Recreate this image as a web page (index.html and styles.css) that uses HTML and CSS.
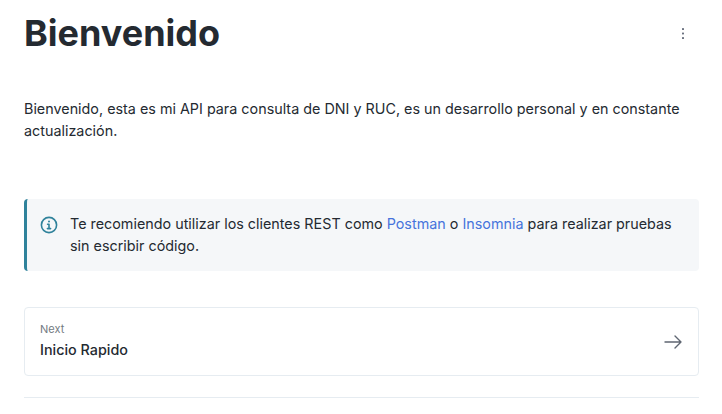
FILE: index.html
```html
<!DOCTYPE html>
<html lang="es">
  <head>
    <meta charset="UTF-8" />
    <meta name="viewport" content="width=device-width, initial-scale=1.0" />
    <title>Bienvenido</title>
    <link rel="stylesheet" href="styles.css">
  </head>
  <body>
    <main class="pagina">
      <header class="cabecera">
        <h1>Bienvenido</h1>
        <button class="menu" aria-label="Opciones">
          <svg width="16" height="16" viewBox="0 0 16 16" fill="#6b7280">
            <rect x="7" y="3" width="2" height="2" rx="0.6" />
            <rect x="7" y="7.4" width="2" height="2" rx="0.6" />
            <rect x="7" y="12" width="2" height="2" rx="0.6" />
          </svg>
        </button>
      </header>

      <p class="intro">Bienvenido, esta es mi API para consulta de DNI y RUC, es un desarrollo personal y en constante actualización.</p>

      <aside class="aviso">
        <svg class="aviso-icono" width="18" height="18" viewBox="0 0 18 18" fill="none" stroke="#2f829b" stroke-width="1.6" stroke-linecap="round" stroke-linejoin="round">
          <circle cx="9" cy="9" r="7.6" />
          <path d="M7.6 8.3H9V12.6M7.4 12.6H10.6" />
          <path d="M9 5.4V5.5" stroke-width="2" />
        </svg>
        <p>Te recomiendo utilizar los clientes REST como <a href="#">Postman</a> o <a href="#">Insomnia</a> para realizar pruebas sin escribir código.</p>
      </aside>

      <a class="siguiente" href="#">
        <span class="siguiente-texto">
          <small>Next</small>
          <strong>Inicio Rapido</strong>
        </span>
        <svg width="18" height="14" viewBox="0 0 18 14" fill="none" stroke="#5f6672" stroke-width="1.4" stroke-linecap="round" stroke-linejoin="round">
          <path d="M1 7H17M11 1L17 7L11 13" />
        </svg>
      </a>

      <hr class="linea" />
    </main>
  </body>
</html>
```

FILE: styles.css
```css
* {
  box-sizing: border-box;
}

body {
  margin: 0;
  background-color: white;
  color: #242a31;
  font-family: "Inter", "Noto Sans", sans-serif;
  font-size: 14.35px;
  line-height: 22px;
}

.pagina {
  padding: 0 23px 0 24px;
}

.cabecera {
  display: flex;
  justify-content: space-between;
  align-items: center;
  height: 66px;
}

h1 {
  margin: 0;
  font-size: 36px;
  line-height: 66px;
  font-weight: 700;
}

.menu {
  display: flex;
  margin-right: 8px;
  padding: 0;
  border: none;
  background: none;
}

.intro {
  margin: 32px 0 0;
}

.aviso {
  display: flex;
  gap: 12px;
  margin-top: 57px;
  padding: 14px 16px 14px 13px;
  border-left: 3px solid #2f829b;
  border-radius: 4px;
  background-color: #f5f7f9;
}

.aviso p {
  margin: 0;
}

.aviso-icono {
  flex-shrink: 0;
  margin-top: 3px;
}

.aviso a {
  color: #4674dc;
  text-decoration: none;
}

.siguiente {
  display: flex;
  justify-content: space-between;
  align-items: center;
  height: 69px;
  margin-top: 36px;
  padding: 0 16px 0 15px;
  border: 1px solid #e6ecf1;
  border-radius: 4px;
  color: inherit;
  text-decoration: none;
}

.siguiente-texto {
  display: flex;
  flex-direction: column;
}

.siguiente-texto small {
  color: #737a82;
  font-size: 11px;
  line-height: 14px;
}

.siguiente-texto strong {
  margin-top: 2px;
  font-size: 14.35px;
  line-height: 24px;
  font-weight: 500;
}

.linea {
  height: 1px;
  margin: 21px 0 0;
  border: none;
  background-color: #e6ecf1;
}
```
